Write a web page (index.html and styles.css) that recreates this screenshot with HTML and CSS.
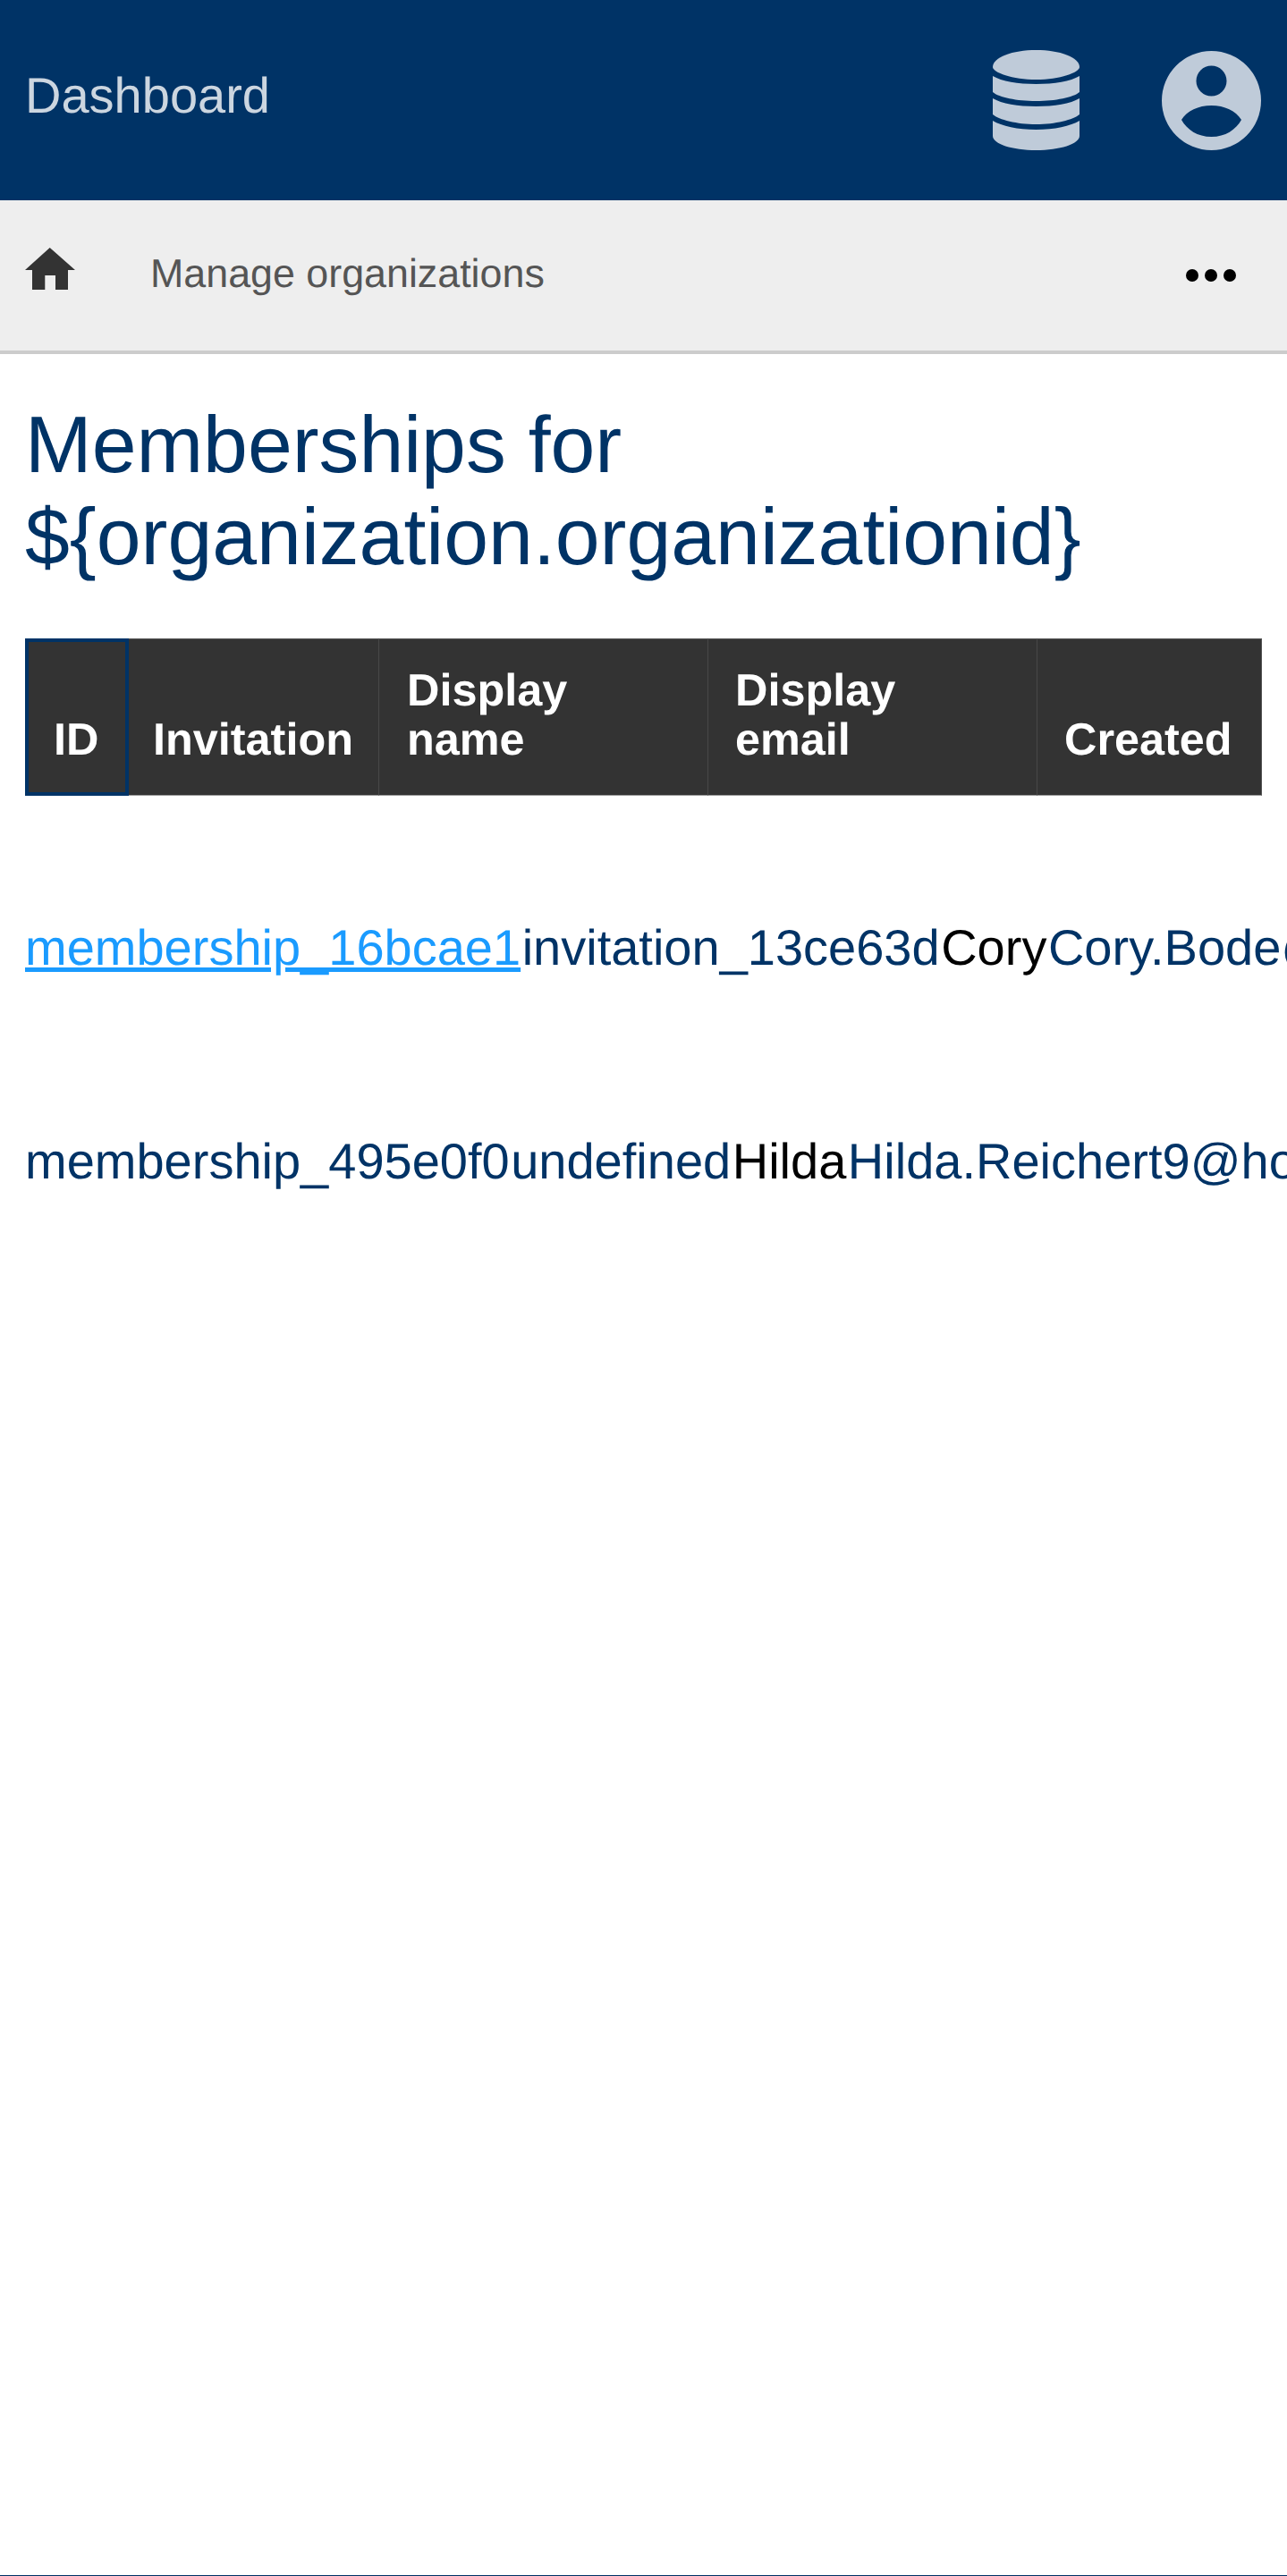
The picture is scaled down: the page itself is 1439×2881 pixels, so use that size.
FILE: index.html
```html
<!DOCTYPE html>
<html lang="en">
<head>
<meta charset="utf-8">
<title>Memberships</title>
<link rel="stylesheet" href="styles.css">
</head>
<body>
<div class="page">
  <header class="topbar">
    <a class="brand" href="#">Dashboard</a>
    <div class="topbar-icons">
      <svg class="icon-db" viewBox="0 0 97 112" aria-hidden="true"><path d="M0 19C0 8 22 0 48.5 0S97 8 97 19C97 25 75 33 48.5 33S0 25 0 19Z"/><path d="M0 29C10 35 28 38 48.5 38S87 35 97 29V47C90 53 70 57 48.5 57S7 53 0 47Z"/><path d="M0 54C10 60 28 63 48.5 63S87 60 97 54V72C90 78 70 83 48.5 83S7 78 0 72Z"/><path d="M0 79C10 85 28 89 48.5 89S87 85 97 79V96C97 105 75 112 48.5 112S0 105 0 96Z"/></svg>
      <svg class="icon-user" viewBox="0 0 111 111" aria-hidden="true"><path fill-rule="evenodd" d="M55.5 0a55.5 55.5 0 1 0 0 111a55.5 55.5 0 1 0 0-111ZM55.5 16.5a17 17 0 1 1 0 34a17 17 0 1 1 0-34ZM22 77C28 67 41 61 55.5 61S83 67 89 77C83 88 71 96 55.5 96S28 88 22 77Z"/></svg>
    </div>
  </header>
  <nav class="crumbs">
    <svg class="icon-home" viewBox="0 0 56 47" aria-hidden="true"><path d="M27.7 0L56 25H48V47H34V31H22.3V47H8V25H0Z"/></svg>
    <a class="crumb-link" href="#">Manage organizations</a>
    <svg class="icon-more" viewBox="0 0 56 14" aria-hidden="true"><circle cx="7" cy="7" r="7"/><circle cx="28" cy="7" r="7"/><circle cx="49" cy="7" r="7"/></svg>
  </nav>
  <main class="content">
    <h1 class="title">Memberships for ${organization.organizationid}</h1>
    <div class="thead">
      <div class="th th-focus">ID</div>
      <div class="th th-invite">Invitation</div>
      <div class="th">Display name</div>
      <div class="th th-email">Display email</div>
      <div class="th th-last">Created</div>
    </div>
    <div class="rows">
      <div class="row">
        <a class="cell cell-link" href="#">membership_16bcae1</a>
        <span class="cell">invitation_13ce63d</span>
        <span class="cell cell-name">Cory</span>
        <span class="cell">Cory.Bode@hotmail.com</span>
      </div>
      <div class="row">
        <span class="cell">membership_495e0f0</span>
        <span class="cell">undefined</span>
        <span class="cell cell-name">Hilda</span>
        <span class="cell">Hilda.Reichert9@hotmail.com</span>
      </div>
    </div>
  </main>
  <footer class="foot"></footer>
</div>
</body>
</html>
```
FILE: styles.css
```css
* { box-sizing: border-box; }
html, body { margin: 0; padding: 0; }
body {
  font-family: "Liberation Sans", Arial, sans-serif;
  font-size: 56px;
  color: #003366;
  background: #fff;
  text-rendering: geometricPrecision;
}
.page {
  min-height: 2881px;
  display: flex;
  flex-direction: column;
  overflow: hidden;
}
.topbar {
  height: 224px;
  background: #003366;
  display: flex;
  align-items: center;
  justify-content: space-between;
  padding: 0 29px 0 28px;
}
.brand { color: #ccd6e0; text-decoration: none; font-size: 56px; padding-bottom: 12px; }
.topbar-icons { display: flex; align-items: center; gap: 92px; }
.icon-db, .icon-user { display: block; fill: #bfcbd9; }
.icon-db { width: 97px; height: 112px; }
.icon-user { width: 111px; height: 111px; }
.crumbs {
  height: 172px;
  background: #eee;
  border-bottom: 4px solid #ccc;
  display: flex;
  align-items: center;
  padding: 0 57px 0 28px;
}
.icon-home { display: block; width: 56px; height: 47px; fill: #333; margin-bottom: 15px; }
.crumb-link { color: #555; text-decoration: none; font-size: 44.8px; margin-left: 84px; padding-bottom: 3px; flex: 1; }
.icon-more { display: block; width: 56px; height: 14px; fill: #000; }
.content { flex: 1; padding: 50px 28px 0; }
.title {
  margin: 0 0 62px;
  font-size: 89.6px;
  font-weight: 400;
  line-height: 103px;
}
.thead {
  display: grid;
  grid-template-columns: 116px 280px 368px 368px 251px;
  width: 1383px;
  height: 176px;
  background: #333;
}
.th {
  display: flex;
  align-items: flex-end;
  padding: 0 30px 35px 31px;
  color: #fff;
  font-size: 50.4px;
  font-weight: 700;
  line-height: 55px;
  border-top: 1px solid #555;
  border-bottom: 1px solid #999;
  border-right: 1px solid #484848;
}
.th-invite { padding-left: 27px; }
.th-email { padding-left: 30px; }
.th-last { border-right-color: #555; padding-left: 30px; }
.th-focus { border: 4px solid #003366; padding: 0 0 32px 28px; }
.rows { margin-top: 138px; display: flex; flex-direction: column; gap: 175px; }
.row { display: flex; gap: 1.5px; white-space: nowrap; line-height: 64px; }
.cell { flex: none; }
.cell-link { color: #1a9bff; text-decoration: underline; }
.cell-name { color: #000; }
.foot { height: 1px; background: #003366; }
```
